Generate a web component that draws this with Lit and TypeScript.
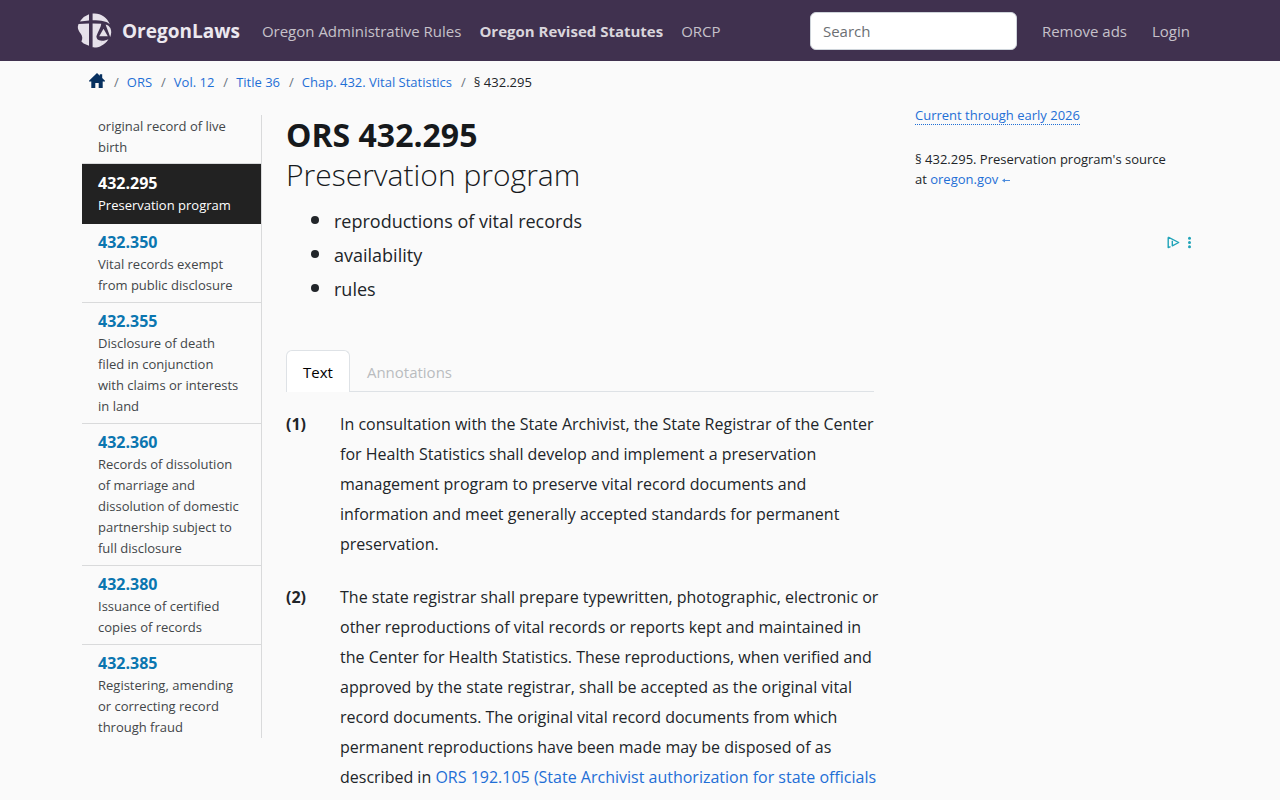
import { LitElement, html, css } from "lit";
import { customElement } from "lit/decorators.js";

interface Section {
  number: string;
  title: string;
  active?: boolean;
}

const SECTIONS: Section[] = [
  { number: "", title: "original record of live birth" },
  { number: "432.295", title: "Preservation program", active: true },
  { number: "432.350", title: "Vital records exempt from public disclosure" },
  { number: "432.355", title: "Disclosure of death filed in conjunction with claims or interests in land" },
  { number: "432.360", title: "Records of dissolution of marriage and dissolution of domestic partnership subject to full disclosure" },
  { number: "432.380", title: "Issuance of certified copies of records" },
  { number: "432.385", title: "Registering, amending or correcting record through fraud" },
];

@customElement("site-header")
class SiteHeader extends LitElement {
  static styles = css`
    :host { display: block; background: #40314f; }
    .bar {
      box-sizing: border-box; max-width: 1140px; height: 61px; margin: 0 auto; padding: 0 20px 0 7px;
      display: flex; align-items: center; font-size: 15px; line-height: 24px;
    }
    a { color: #c6c1ca; text-decoration: none; white-space: nowrap; }
    .brand { display: flex; align-items: center; gap: 10px; color: #ece8ef; font-size: 19px; font-weight: 700; margin-right: 22px; }
    .links { display: flex; gap: 18px; flex: 1; }
    .current { font-weight: 700; color: #d9d5dc; }
    .search {
      box-sizing: border-box; width: 207px; height: 38px; padding: 0 12px; margin-right: 25px;
      border: 1px solid #ced4da; border-radius: 6px; background: #fff; color: #212529; font: inherit;
    }
    .search::placeholder { color: #6c6f73; opacity: 1; }
    .account { display: flex; gap: 25px; }
  `;
  render() {
    return html`<nav class="bar" aria-label="Main">
      <a class="brand" href="#">
        <svg width="35" height="35" viewBox="0 0 35 35" aria-hidden="true">
          <g fill="#e6e1ea">
            <path d="M3.800 7.300A17 17 0 0 1 12 1.200V7.600L3 8.600Z"/>
            <path d="M1.500 11 12 10.400V32.800L6.600 30.500 4.400 28.500C6 25.500 5.300 22.500 3.600 20.500 2 18.500.8 16.500.8 13.800Z"/>
            <path d="M15.600.5C23.500-.3 30 4 32.800 11.300 29.500 8.300 25 7.300 15.600 7.300Z"/>
            <path d="M15.600 10.500 24.300 10.800C24 14.500 21 18.500 19.400 23.300 19.400 26 21 27.500 24.500 27.800L24 32.900C21.500 34.200 18.500 34.700 15.600 34.300Z"/>
            <path d="M26.500 15.700 30.800 23.200H22.200Z"/>
            <path d="M28.600 11.400C32.500 12.300 34.300 15.500 34.200 19.600 34 21.500 33.700 22.700 33.200 23.900Z"/>
            <path d="M24.200 27.800C27.500 27.900 29.500 27.200 31.500 26.300 29.500 29.500 27 31.700 23.800 33Z"/>
          </g>
        </svg>
        <span>OregonLaws</span>
      </a>
      <div class="links">
        <a href="#">Oregon Administrative Rules</a>
        <a href="#" class="current">Oregon Revised Statutes</a>
        <a href="#">ORCP</a>
      </div>
      <input class="search" type="search" placeholder="Search" aria-label="Search" />
      <div class="account"><a href="#">Remove ads</a><a href="#">Login</a></div>
    </nav>`;
  }
}

@customElement("section-list")
class SectionList extends LitElement {
  static styles = css`
    :host { display: block; border-right: 1px solid #d9dadb; }
    .item {
      display: block; padding: 6px 20px 6px 16px; border-bottom: 1px solid #d9dadb;
      color: #424649; text-decoration: none; font-size: 13px; line-height: 21px;
    }
    .item:first-child { padding-top: 1px; padding-bottom: 5px; }
    .item:last-child { border-bottom: 0; padding-bottom: 0; }
    .number { display: block; font-size: 16px; line-height: 24px; font-weight: 700; color: #0b76b0; }
    .active { background: #222; border-color: #222; color: #fff; padding-top: 7px; padding-bottom: 7px; }
    .active .number { color: #fff; }
  `;
  render() {
    return html`<nav aria-label="Sections">${SECTIONS.map(
      (s) => html`<a href="#" class="item ${s.active ? "active" : ""}">${
        s.number ? html`<span class="number">${s.number}</span>` : ""
      }${s.title}</a>`
    )}</nav>`;
  }
}

@customElement("app-root")
class AppRoot extends LitElement {
  static styles = css`
    :host {
      display: block; min-height: 100vh; background: #fafafa; color: #212529;
      font-family: "Open Sans", "Noto Sans", sans-serif; font-size: 15px; line-height: 24px;
    }
    a { color: #1f6fd6; text-decoration: none; }
    .container { box-sizing: border-box; max-width: 1140px; margin: 0 auto; padding: 0 12px; }
    .crumbs {
      display: flex; flex-wrap: wrap; align-items: center; list-style: none; margin: 0; padding: 11px 7px 0;
      font-size: 13px; line-height: 21px;
    }
    .crumbs li + li::before { content: "/"; color: #6c757d; padding: 0 8px 0 9px; }
    .home { display: block; height: 20px; }
    .columns { display: grid; grid-template-columns: 180px minmax(0, 1fr) 283px; align-items: start; padding-top: 12px; }
    section-list { margin-top: 10px; }
    article { padding: 10px 41px 0 24px; }
    h1 { margin: 0; font-size: 32px; line-height: 40px; font-weight: 700; color: #16191c; }
    .name { display: block; font-size: 30px; font-weight: 300; }
    .topics { margin: 8px 0 0; padding-left: 48px; font-size: 18px; line-height: 32px; }
    .topics li::marker { font-size: 22px; }
    .tabs { display: flex; margin-top: 45px; border-bottom: 1px solid #dee2e6; }
    .tab {
      height: 42px; margin-bottom: -1px; padding: 0 16px; border: 1px solid transparent; border-bottom: 0;
      border-radius: 6px 6px 0 0; background: none; color: #b9bcbf; font: inherit;
    }
    .selected { background: #fff; border-color: #dee2e6; color: #000; }
    .clause {
      display: grid; grid-template-columns: 54px minmax(0, 1fr); margin: 23px 0 0;
      font-size: 16px; line-height: 30px; white-space: nowrap;
    }
    .clause p { margin: 0; }
    .first { margin-top: 17px; }
    .meta { font-size: 13px; line-height: 20px; }
    .meta p { margin: 0 0 24px; }
    .current { border-bottom: 1px dotted #1f6fd6; }
    .ad { display: flex; justify-content: flex-end; padding: 23px 3px 0 0; }
  `;
  render() {
    return html`
      <site-header></site-header>
      <div class="container">
        <nav aria-label="Breadcrumb">
          <ol class="crumbs">
            <li><a class="home" href="#" aria-label="Home"><svg width="16" height="15" viewBox="0 0 16 15" aria-hidden="true"><path fill="#07305f" d="M8 0 10.800 2.700V1.200H13.200V5L16 7.800V8.500H13.700V15H9.700V10H6.300V15H2.300V8.500H0V7.800Z"/></svg></a></li>
            <li><a href="#">ORS</a></li>
            <li><a href="#">Vol. 12</a></li>
            <li><a href="#">Title 36</a></li>
            <li><a href="#">Chap. 432. Vital Statistics</a></li>
            <li>§ 432.295</li>
          </ol>
        </nav>
        <div class="columns">
          <section-list></section-list>
          <article>
            <h1>ORS 432.295 <span class="name">Preservation program</span></h1>
            <ul class="topics">
              <li>reproductions of vital records</li>
              <li>availability</li>
              <li>rules</li>
            </ul>
            <div class="tabs" role="tablist">
              <button class="tab selected" role="tab" aria-selected="true">Text</button>
              <button class="tab" role="tab" aria-selected="false">Annotations</button>
            </div>
            <section class="clause first">
              <strong>(1)</strong>
              <p>
                In consultation with the State Archivist, the State Registrar of the Center<br />
                for Health Statistics shall develop and implement a preservation<br />
                management program to preserve vital record documents and<br />
                information and meet generally accepted standards for permanent<br />
                preservation.
              </p>
            </section>
            <section class="clause">
              <strong>(2)</strong>
              <p>
                The state registrar shall prepare typewritten, photographic, electronic or<br />
                other reproductions of vital records or reports kept and maintained in<br />
                the Center for Health Statistics. These reproductions, when verified and<br />
                approved by the state registrar, shall be accepted as the original vital<br />
                record documents. The original vital record documents from which<br />
                permanent reproductions have been made may be disposed of as<br />
                described in <a href="#">ORS 192.105 (State Archivist authorization for state officials</a>
              </p>
            </section>
          </article>
          <aside class="meta">
            <p><a class="current" href="#">Current through early 2026</a></p>
            <p>§ 432.295. Preservation program's source<br />at <a href="#">oregon.gov <svg width="8" height="7" viewBox="0 0 8 7" aria-hidden="true"><path fill="#1f6fd6" fill-opacity=".8" d="M0 3.500 3 1.500V3H8V4H3V5.500Z"/></svg></a></p>
            <div class="ad">
              <svg width="28" height="13" viewBox="0 0 28 13" role="img" aria-label="Ad choices">
                <g fill="none" stroke="#1fa3b8" stroke-width="1.400" stroke-linejoin="round"><path d="M1.200 1.200V11.600L3.500 10.700M1.200 1.200 11.700 6.500 5.300 9.800V4.700"/></g>
                <g fill="#1fa3b8"><circle cx="22.500" cy="2.200" r="1.500"/><circle cx="22.500" cy="6.500" r="1.500"/><circle cx="22.500" cy="10.800" r="1.500"/></g>
              </svg>
            </div>
          </aside>
        </div>
      </div>`;
  }
}
